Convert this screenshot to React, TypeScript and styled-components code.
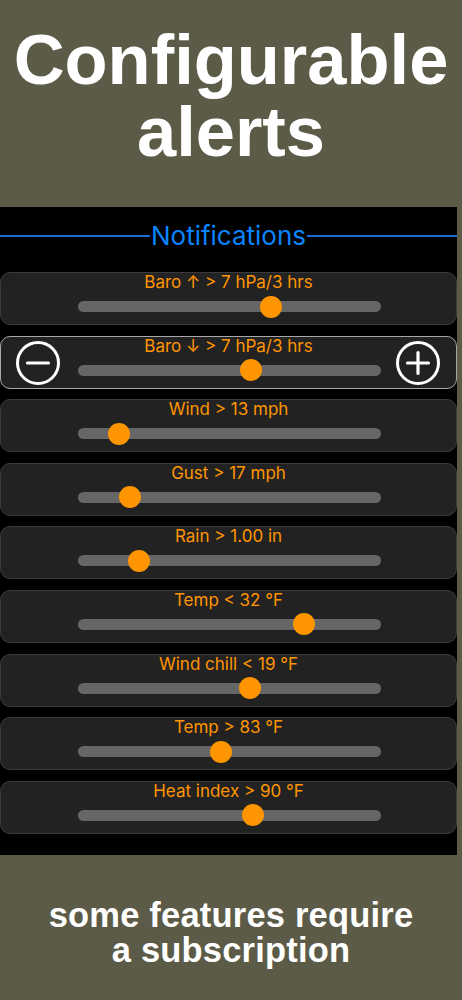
import React from 'react'
import styled, { createGlobalStyle } from 'styled-components'

type Alert = {
  label: string
  value: number
  active?: boolean
}

const TRACK_LEFT = 77
const TRACK_WIDTH = 303

const alerts: Alert[] = [
  { label: 'Baro ↑ > 7 hPa/3 hrs', value: 270 },
  { label: 'Baro ↓ > 7 hPa/3 hrs', value: 250, active: true },
  { label: 'Wind > 13 mph', value: 118 },
  { label: 'Gust > 17 mph', value: 129 },
  { label: 'Rain > 1.00 in', value: 138 },
  { label: 'Temp < 32 °F', value: 303 },
  { label: 'Wind chill < 19 °F', value: 249 },
  { label: 'Temp > 83 °F', value: 220 },
  { label: 'Heat index > 90 °F', value: 252 },
]

const GlobalStyle = createGlobalStyle`
  html, body {
    margin: 0;
    padding: 0;
    background: #5c5b47;
  }
  body {
    font-family: Inter, "Liberation Sans", sans-serif;
  }
`

const RoundButton = ({ plus }: { plus?: boolean }) => (
  <svg width="46" height="46" viewBox="0 0 46 46">
    <circle cx="23" cy="23" r="20.5" fill="none" stroke="#fff" strokeWidth="3" />
    <line x1="12.5" y1="23" x2="33.5" y2="23" stroke="#fff" strokeWidth="3.2" strokeLinecap="round" />
    {plus && (
      <line x1="23" y1="12.5" x2="23" y2="33.5" stroke="#fff" strokeWidth="3.2" strokeLinecap="round" />
    )}
  </svg>
)

const AlertCard = ({ label, value, active }: Alert) => (
  <Card $active={active}>
    {active && (
      <SideButton $side="left">
        <RoundButton />
      </SideButton>
    )}
    <Label>{label}</Label>
    <Track>
      <Thumb style={{ left: value - TRACK_LEFT }} />
    </Track>
    {active && (
      <SideButton $side="right">
        <RoundButton plus />
      </SideButton>
    )}
  </Card>
)

const App = () => (
  <Page>
    <GlobalStyle />
    <Headline>
      Configurable
      <br />
      alerts
    </Headline>
    <Panel>
      <SectionTitle>
        <Rule />
        <TitleText>Notifications</TitleText>
        <Rule />
      </SectionTitle>
      <CardList>
        {alerts.map((a) => (
          <AlertCard key={a.label} {...a} />
        ))}
      </CardList>
    </Panel>
    <Footer>
      <FooterLine>some features require</FooterLine>
      <FooterLine>a subscription</FooterLine>
    </Footer>
  </Page>
)

const Page = styled.div`
  width: 462px;
  min-height: 1000px;
  background: #5c5b47;
`

const Headline = styled.h1`
  margin: 0;
  height: 207px;
  box-sizing: border-box;
  padding-top: 24px;
  text-align: center;
  color: #fff;
  font-family: "Liberation Sans", Arial, sans-serif;
  font-weight: 700;
  font-size: 70.5px;
  line-height: 72px;
`

const Panel = styled.section`
  width: 457px;
  background: #000;
  padding: 14px 0 21px;
`

const SectionTitle = styled.div`
  display: flex;
  align-items: center;
  height: 30px;
`

const Rule = styled.div`
  flex: 1;
  height: 2px;
  background: #1a6ad8;
`

const TitleText = styled.span`
  color: #0a84ff;
  font-size: 26px;
  line-height: 30px;
  padding: 0 1px;
`

const CardList = styled.div`
  display: flex;
  flex-direction: column;
  gap: 10.6px;
  margin-top: 21px;
`

const Card = styled.div<{ $active?: boolean }>`
  position: relative;
  height: 53px;
  box-sizing: border-box;
  background: #222;
  border: 1px solid ${(p) => (p.$active ? '#a8a8a8' : '#3b3b3b')};
  border-radius: 10px;
  display: flex;
  flex-direction: column;
  align-items: center;
`

const Label = styled.div`
  color: #ff9500;
  font-size: 17px;
  line-height: 20px;
  margin-top: -1px;
`

const Track = styled.div`
  position: relative;
  width: ${TRACK_WIDTH}px;
  height: 11px;
  margin-top: 9px;
  margin-left: 1px;
  border-radius: 6px;
  background: #666;
`

const Thumb = styled.div`
  position: absolute;
  top: 50%;
  width: 22px;
  height: 22px;
  margin: -11px 0 0 -11px;
  border-radius: 50%;
  background: #ff9500;
`

const SideButton = styled.div<{ $side: 'left' | 'right' }>`
  position: absolute;
  top: 3px;
  ${(p) => (p.$side === 'left' ? 'left: 14px;' : 'right: 15px;')}
  width: 46px;
  height: 46px;
  display: flex;
`

const Footer = styled.div`
  padding-top: 43px;
  display: flex;
  flex-direction: column;
  align-items: center;
  color: #fff;
  font-family: "Liberation Sans", Arial, sans-serif;
  font-weight: 700;
  font-size: 34.5px;
  letter-spacing: 0.2px;
`

const FooterLine = styled.div`
  height: 35px;
  line-height: 35px;
`

export default App
